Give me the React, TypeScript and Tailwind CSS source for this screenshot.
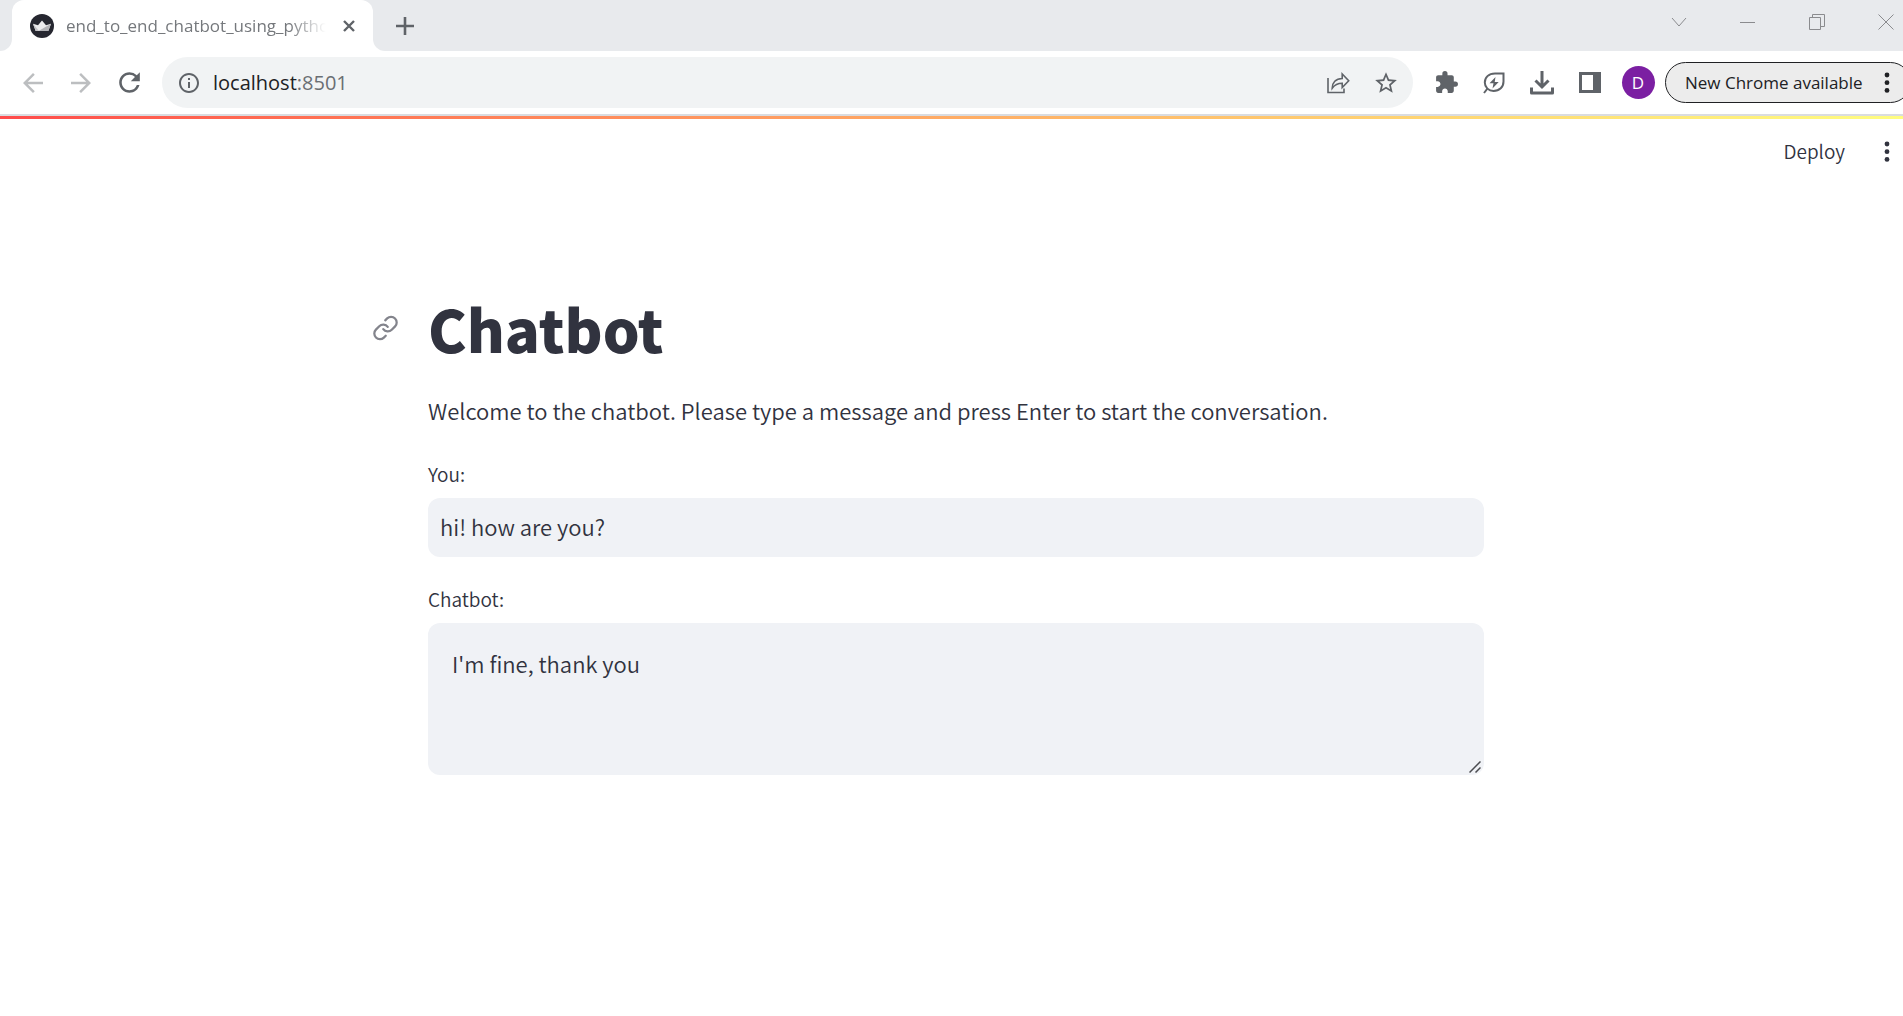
import React, { useState } from "react";
import { MdArrowBack, MdArrowForward, MdExtension, MdInfoOutline, MdRefresh, MdStarBorder } from "react-icons/md";
import { Link } from "lucide-react";

function IconButton({ label, children }: { label: string; children: React.ReactNode }) {
  return (
    <button type="button" aria-label={label} className="flex h-12 w-12 shrink-0 items-center justify-center text-[#5f6368]">
      {children}
    </button>
  );
}

function WindowButton({ label, children }: { label: string; children: React.ReactNode }) {
  return (
    <button type="button" aria-label={label} className="flex h-[43px] w-[69px] items-center justify-center text-[#8a8b8e]">
      <svg width="16" height="16" viewBox="0 0 16 16" fill="none" stroke="currentColor" strokeWidth="1">
        {children}
      </svg>
    </button>
  );
}

function Dots() {
  return (
    <svg width="8" height="22" viewBox="0 0 8 22" fill="currentColor">
      <circle cx="4" cy="3" r="2.4" />
      <circle cx="4" cy="10.7" r="2.4" />
      <circle cx="4" cy="18.4" r="2.4" />
    </svg>
  );
}

function TabStrip() {
  return (
    <div className="flex h-[51px] bg-white">
      <div className="w-3 shrink-0 rounded-br-xl bg-[#e8eaed]" />
      <div className="w-[361px] shrink-0 bg-[#e8eaed]">
        <div className="flex h-full items-center rounded-t-xl bg-white pr-1.5 pl-[18px]">
          <svg width="24" height="24" viewBox="0 0 24 24" className="shrink-0">
            <circle cx="12" cy="12" r="12" fill="#262730" />
            <path d="M3 9.800 8 11.200 12 6.500l4 4.700 5-1.400L18.300 17H5.700Z" fill="#ececee" />
            <path d="M3 9.800 5.700 17H9Z" fill="#c3c3c7" />
            <path d="M21 9.800 8.500 17h9.800Z" fill="#b4b4b8" />
          </svg>
          <div className="ml-3 flex-1 overflow-hidden mask-r-from-84% mask-r-to-98% text-[17px] whitespace-nowrap text-[#75787c]">
            end_to_end_chatbot_using_pytho
          </div>
          <button type="button" aria-label="Close tab" className="flex h-6 w-9 items-center justify-center text-[#5f6368]">
            <svg width="12" height="12" viewBox="0 0 12 12" stroke="currentColor" strokeWidth="2.4">
              <path d="M1 1l10 10M11 1 1 11" />
            </svg>
          </button>
        </div>
      </div>
      <div className="flex flex-1 justify-between overflow-hidden rounded-bl-xl bg-[#e8eaed]">
        <button type="button" aria-label="New tab" className="flex h-[51px] w-16 items-center justify-center text-[#5f6368]">
          <svg width="18" height="18" viewBox="0 0 18 18" stroke="currentColor" strokeWidth="2.6">
            <path d="M9 0v18M0 9h18" />
          </svg>
        </button>
        <div className="-mr-[17px] flex">
          <WindowButton label="Search tabs">
            <path d="M1 4l7 8 7-8" />
          </WindowButton>
          <WindowButton label="Minimize">
            <path d="M0 8.500h15" />
          </WindowButton>
          <WindowButton label="Restore">
            <path d="M.5 3.500h11v12h-11zM3.500 3.500v-3h12v12h-4" />
          </WindowButton>
          <WindowButton label="Close">
            <path d="M.5.5l15 15M15.500.5l-15 15" />
          </WindowButton>
        </div>
      </div>
    </div>
  );
}

function Toolbar() {
  return (
    <div className="flex h-[65px] items-center border-b-2 border-[#dadce0] bg-white pl-[9px]">
      <button type="button" aria-label="Back" className="flex h-12 w-12 items-center justify-center text-[#bcbec0]">
        <MdArrowBack size={30} />
      </button>
      <button type="button" aria-label="Forward" className="flex h-12 w-12 items-center justify-center text-[#bcbec0]">
        <MdArrowForward size={30} />
      </button>
      <IconButton label="Reload">
        <MdRefresh size={31} />
      </IconButton>
      <div className="mx-[9px] flex h-[51px] min-w-0 flex-1 items-center rounded-full bg-[#f1f3f4] pr-[3px] pl-[15px]">
        <MdInfoOutline size={24} className="shrink-0 text-[#5f6368]" />
        <a href="#" className="ml-3 flex-1 text-xl text-[#202124]">
          localhost<span className="text-[#6a6e73]">:8501</span>
        </a>
        <IconButton label="Share this page">
          <svg width="24" height="24" viewBox="0 0 24 24" fill="none" stroke="currentColor" strokeWidth="1.6">
            <path d="M2 7v14.500h16v-4" />
            <path d="M6.200 17.200c0-5.500 3.500-9.700 10-9.700V3l6.500 6.800-6.500 6.700v-4.200c-4 0-7.300 1.200-10 4.900Z" />
          </svg>
        </IconButton>
        <IconButton label="Bookmark this tab">
          <MdStarBorder size={26} />
        </IconButton>
      </div>
      <IconButton label="Extensions">
        <MdExtension size={25} />
      </IconButton>
      <IconButton label="Energy saver">
        <svg width="24" height="24" viewBox="0 0 24 24" fill="none" stroke="currentColor" strokeWidth="2">
          <path d="M21.500 2.500H13C6.500 2.500 2.800 6.500 2.800 11.500c0 5 4 8.500 8.700 8.500 6 0 10-4 10-9.500Z" />
          <path d="M5.500 17.500 2 22" />
          <path d="M13.500 6 7.500 12.200h4L10.500 17.500l6.200-6.500h-4Z" fill="currentColor" stroke="none" />
        </svg>
      </IconButton>
      <IconButton label="Downloads">
        <svg width="24" height="24" viewBox="0 0 24 24" fill="none" stroke="currentColor" strokeWidth="3">
          <path d="M12 0v15M5.500 9.500l6.500 6.500 6.500-6.500" />
          <path d="M1.500 16.500v5.500h21v-5.500" strokeLinejoin="round" />
        </svg>
      </IconButton>
      <IconButton label="Side panel">
        <svg width="22" height="22" viewBox="0 0 22 22" fill="currentColor">
          <path fillRule="evenodd" d="M0 0h22v21H0ZM3 3v15h11V3Z" />
        </svg>
      </IconButton>
      <IconButton label="Profile">
        <span className="flex h-[33px] w-[33px] items-center justify-center rounded-full bg-[#7b1fa2] text-[17px] text-white">D</span>
      </IconButton>
      <button
        type="button"
        className="-mr-2 ml-[3px] flex h-[41px] w-[246px] shrink-0 items-center justify-between rounded-full border border-[#202124] bg-[#ececec] px-[19px] text-[17px] whitespace-nowrap text-[#202124]"
      >
        New Chrome available
        <Dots />
      </button>
    </div>
  );
}

export default function App() {
  const [message, setMessage] = useState("hi! how are you?");

  return (
    <div className="min-h-screen overflow-hidden bg-white font-['Noto_Sans_CJK_SC','Noto_Sans',sans-serif] font-[350] text-[#31333f]">
      <header className="font-['Open_Sans','Noto_Sans',sans-serif] font-normal">
        <TabStrip />
        <Toolbar />
      </header>
      <div className="h-[3px] bg-linear-to-r from-[#ff4b4b] to-[#fffd80]" />
      <div className="flex h-[65px] items-center justify-end gap-[38px] pr-3">
        <button type="button" className="text-[19px]">
          Deploy
        </button>
        <button type="button" aria-label="Main menu">
          <Dots />
        </button>
      </div>
      <main className="pl-[9px]">
        <div className="mx-auto max-w-[1056px] pt-26">
          <div className="relative">
            <a href="#chatbot" aria-label="Link to heading" className="absolute top-1/2 -left-14 -translate-y-1/2 text-[#83848c]">
              <Link size={27} strokeWidth={2} />
            </a>
            <h1 id="chatbot" className="text-[58px] leading-[80px] font-black">
              Chatbot
            </h1>
          </div>
          <p className="mt-6 text-[22px] leading-9">
            Welcome to the chatbot. Please type a message and press Enter to start the conversation.
          </p>
          <label htmlFor="you" className="mt-[30px] block text-[19px] leading-8">
            You:
          </label>
          <input
            id="you"
            type="text"
            value={message}
            onChange={(e) => setMessage(e.target.value)}
            className="mt-2 block h-[59px] w-full rounded-xl bg-[#f0f2f6] px-3 pb-1 text-[22px] outline-none"
          />
          <label htmlFor="reply" className="mt-[26px] block text-[19px] leading-8">
            Chatbot:
          </label>
          <div className="relative mt-2">
            <textarea
              id="reply"
              defaultValue="I'm fine, thank you"
              className="block h-[152px] w-full resize-none rounded-xl bg-[#f0f2f6] px-6 py-[22px] text-[22px] leading-9 outline-none"
            />
            <svg width="12" height="12" viewBox="0 0 12 12" stroke="#4b4c50" strokeWidth="1.5" className="absolute right-[3px] bottom-[2px]">
              <path d="M.5 11.500l11-11M6.500 11.500l5-5" />
            </svg>
          </div>
        </div>
      </main>
    </div>
  );
}
